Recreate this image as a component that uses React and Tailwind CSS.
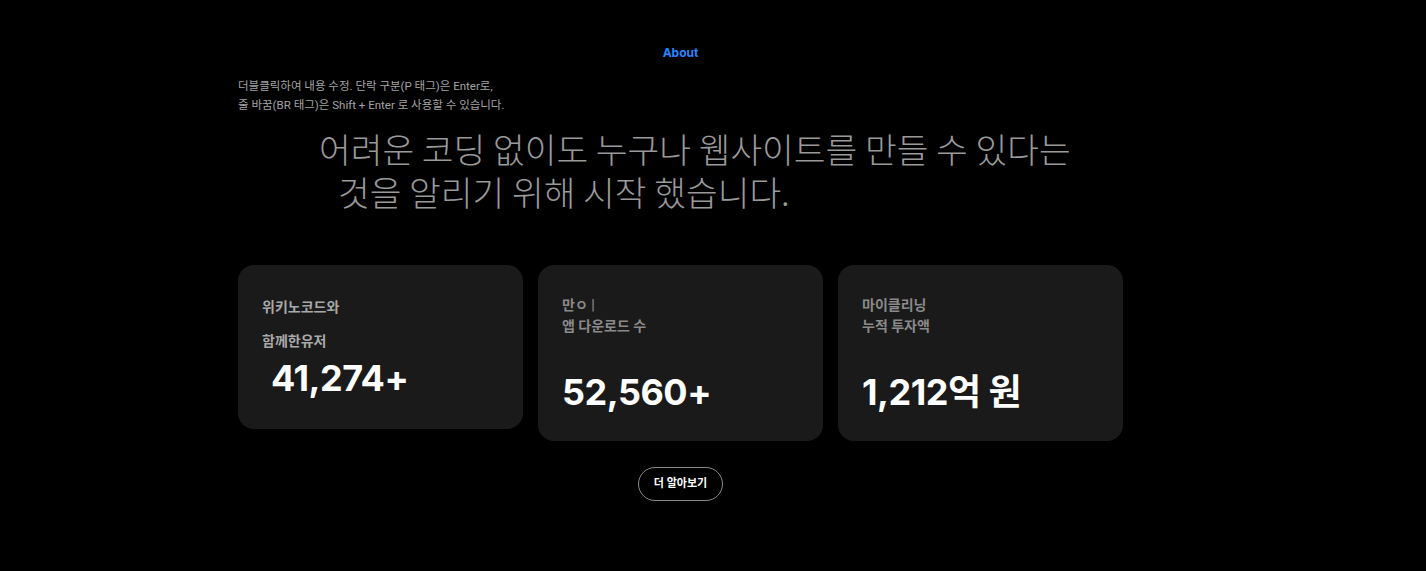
import React from "react";

const KR = { fontFamily: 'Roboto, "Noto Sans CJK KR", sans-serif' };
const NUM = { fontFamily: 'Inter, "Noto Sans CJK KR", sans-serif' };

function StatCard({ lines, value, tall, labelClass, gapClass, valueClass }) {
  return (
    <div
      className={`w-[285px] shrink-0 rounded-2xl bg-[#1a1a1a] px-6 ${tall ? "h-[176px]" : "h-[164px]"}`}
    >
      <div className={`text-[14px] font-bold ${labelClass}`} style={KR}>
        {lines.map(l => (
          <div key={l} className={gapClass}>
            {l}
          </div>
        ))}
      </div>
      <div className={`text-[36px] font-bold text-white tracking-[-0.5px] ${valueClass}`} style={NUM}>
        {value}
      </div>
    </div>
  );
}

export default function App() {
  return (
    <div className="min-h-[571px] w-full bg-black" style={KR}>
      <div className="ml-[238px] w-[885px] pt-[44px]">
        <div className="text-center text-[12px] font-bold text-[#2a84ff]" style={NUM}>
          About
        </div>

        <div className="mt-[15px] text-[11.5px] leading-[19px] text-[#a3a3a3]">
          <p>더블클릭하여 내용 수정. 단락 구분(P 태그)은 Enter로,</p>
          <p>줄 바꿈(BR 태그)은 Shift + Enter 로 사용할 수 있습니다.</p>
        </div>

        <div
          className="mt-[12px] pl-[81px] text-[34.5px] font-light leading-[43px] text-[#9a9a9a]"
          style={{ fontFamily: '"Noto Sans CJK KR", sans-serif' }}
        >
          <div>어려운 코딩 없이도 누구나 웹사이트를 만들 수 있다는</div>
          <div className="pl-[19px]">것을 알리기 위해 시작 했습니다.</div>
        </div>

        <div className="mt-[52px] flex items-start gap-[15px]">
          <StatCard
            lines={["위키노코드와", "함께한유저"]}
            value="41,274+"
            labelClass="pt-[32px] text-[#a8a8a8] leading-[20px]"
            gapClass="mb-[14px]"
            valueClass="pl-[9px] -mt-[9px] leading-[44px]"
          />
          <StatCard
            tall
            lines={["만ㅇ |", "앱 다운로드 수"]}
            value="52,560+"
            labelClass="pt-[30px] text-[#8a8a8a] leading-[21px]"
            gapClass=""
            valueClass="mt-[33px] leading-[44px]"
          />
          <StatCard
            tall
            lines={["마이클리닝", "누적 투자액"]}
            value="1,212억 원"
            labelClass="pt-[30px] text-[#8a8a8a] leading-[21px]"
            gapClass=""
            valueClass="mt-[33px] leading-[44px]"
          />
        </div>

        <div className="mt-[26px] flex justify-center">
          <button className="h-[34px] w-[85px] rounded-full border border-[#8a8a8a] text-[11px] font-bold text-white">
            더 알아보기
          </button>
        </div>
      </div>
    </div>
  );
}
